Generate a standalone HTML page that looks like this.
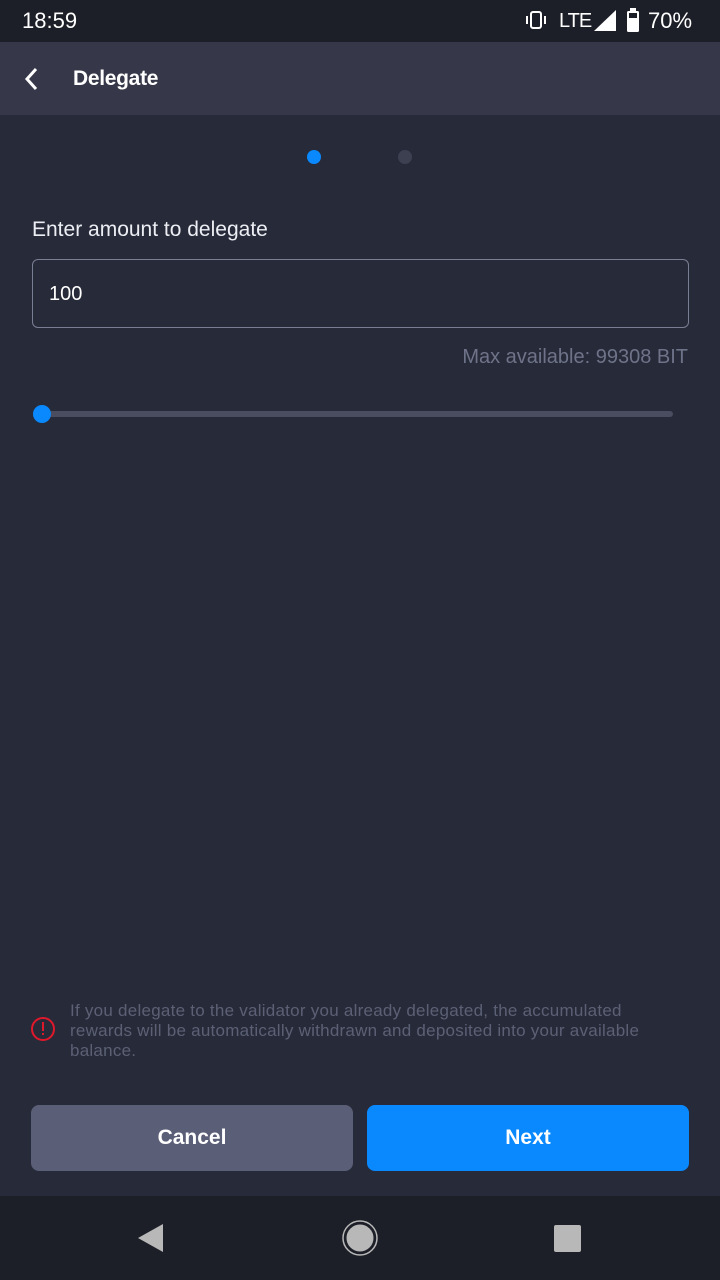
<!DOCTYPE html>
<html><head><style>
body{margin:0;width:720px;height:1280px;background:#272a38;font-family:"Liberation Sans",sans-serif;position:relative;overflow:hidden;color:#fff}
.a{position:absolute}
</style></head><body>
<div class="a" style="left:0;top:0;width:720px;height:42px;background:#1d1f28"></div>
<div class="a" style="left:22px;top:8px;font-size:22px">18:59</div>
<div class="a" style="left:524px;top:10px;width:24px;height:20px">
<svg width="24" height="20"><rect x="7" y="2" width="10" height="16" rx="2" fill="none" stroke="#fff" stroke-width="2"/><rect x="2" y="6" width="2" height="8" fill="#fff"/><rect x="20" y="6" width="2" height="8" fill="#fff"/></svg></div>
<div class="a" style="left:559px;top:10px;font-size:20px;letter-spacing:-1px">LTE</div>
<svg class="a" style="left:594px;top:10px" width="22" height="22"><polygon points="22,0 22,21 0,21" fill="#fff"/></svg>
<svg class="a" style="left:626px;top:8px" width="14" height="24"><rect x="4" y="0" width="6" height="3" fill="#fff"/><rect x="1" y="3" width="12" height="21" rx="1.5" fill="#fff"/><rect x="3" y="5" width="8" height="5" fill="#1d1f28"/></svg>
<div class="a" style="left:648px;top:8px;font-size:22px">70%</div>
<div class="a" style="left:0;top:42px;width:720px;height:73px;background:#363849"></div>
<svg class="a" style="left:22px;top:66px" width="20" height="26"><path d="M14 3 L5 13 L14 23" fill="none" stroke="#fff" stroke-width="3"/></svg>
<div class="a" style="left:73px;top:67px;font-size:21px;font-weight:bold;letter-spacing:-0.3px">Delegate</div>
<div class="a" style="left:307px;top:150px;width:14px;height:14px;border-radius:50%;background:#0a89ff"></div>
<div class="a" style="left:398px;top:150px;width:14px;height:14px;border-radius:50%;background:#3d4050"></div>
<div class="a" style="left:32px;top:218px;font-size:21px;color:#eceef4">Enter amount to delegate</div>
<div class="a" style="left:32px;top:259px;border:1.5px solid #7a7e93;border-radius:6px;box-sizing:border-box;width:657px;height:69px"></div>
<div class="a" style="left:49px;top:283px;font-size:20px">100</div>
<div class="a" style="right:32px;top:346px;font-size:20px;color:#6f7389">Max available: 99308 BIT</div>
<div class="a" style="left:40px;top:411px;width:633px;height:6px;border-radius:3px;background:#4a4d60"></div>
<div class="a" style="left:33px;top:405px;width:18px;height:18px;border-radius:50%;background:#0a89ff"></div>
<svg class="a" style="left:30px;top:1016px" width="26" height="26"><circle cx="13" cy="13" r="11" fill="none" stroke="#e0182c" stroke-width="2"/><rect x="12" y="6" width="2" height="9" fill="#e0182c"/><rect x="12" y="17" width="2" height="2" fill="#e0182c"/></svg>
<div class="a" style="left:70px;top:1001px;width:640px;white-space:nowrap;font-size:17px;line-height:20px;color:#5c6075;letter-spacing:0.25px">If you delegate to the validator you already delegated, the accumulated<br>rewards will be automatically withdrawn and deposited into your available<br>balance.</div>
<div class="a" style="left:31px;top:1105px;width:322px;height:66px;border-radius:8px;background:#5b5e77;font-size:21px;font-weight:bold;text-align:center;line-height:66px">Cancel</div>
<div class="a" style="left:367px;top:1105px;width:322px;height:66px;border-radius:8px;background:#0a89ff;font-size:21px;font-weight:bold;text-align:center;line-height:66px">Next</div>
<div class="a" style="left:0;top:1196px;width:720px;height:84px;background:#1d1f28"></div>
<svg class="a" style="left:136px;top:1222px" width="30" height="32"><polygon points="27,2 27,30 2,16" fill="#b8b8b8"/></svg>
<svg class="a" style="left:342px;top:1220px" width="36" height="36"><circle cx="18" cy="18" r="15" fill="#b8b8b8" stroke="#1d1f28" stroke-width="3"/><circle cx="18" cy="18" r="17" fill="none" stroke="#b8b8b8" stroke-width="1.5"/></svg>
<div class="a" style="left:554px;top:1225px;width:27px;height:27px;border-radius:2px;background:#b8b8b8"></div>
</body></html>
